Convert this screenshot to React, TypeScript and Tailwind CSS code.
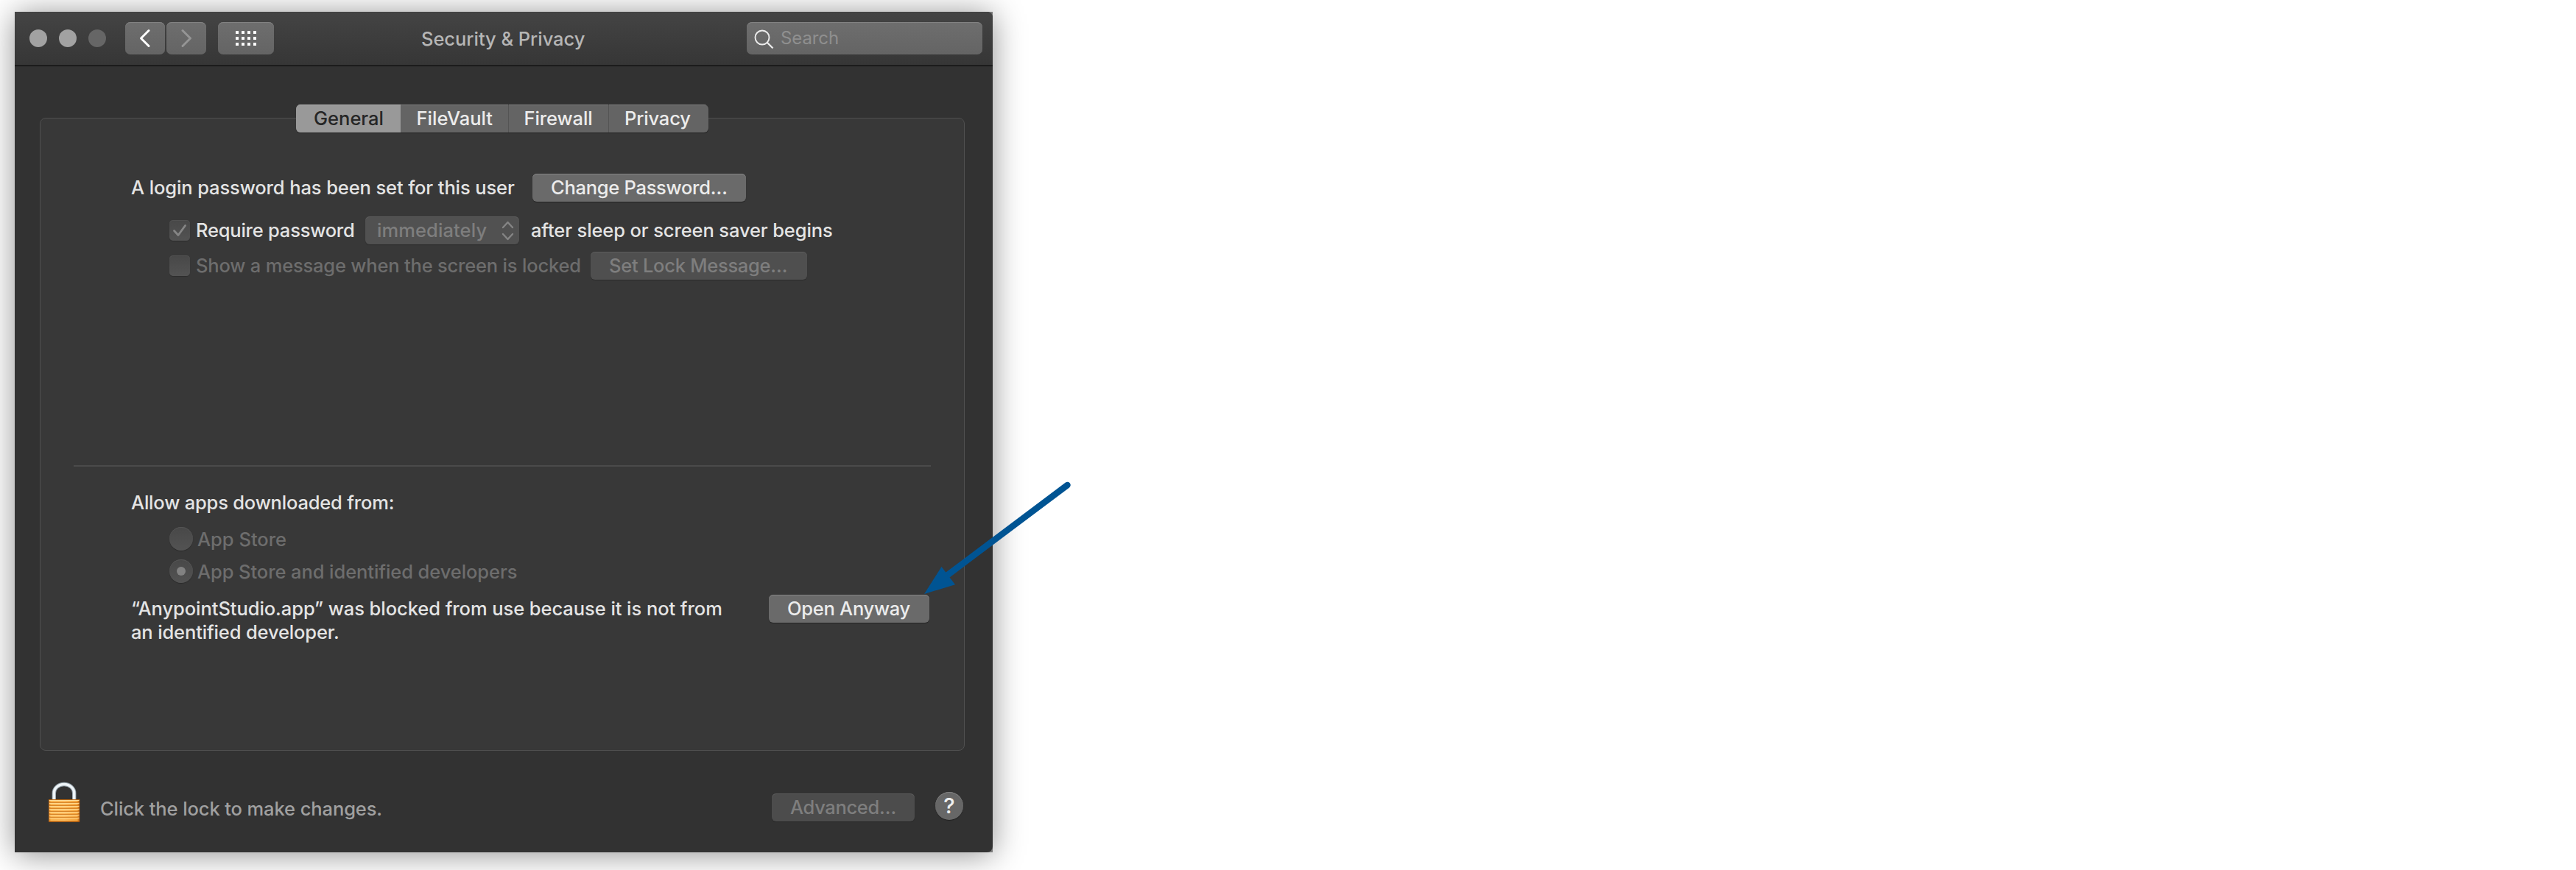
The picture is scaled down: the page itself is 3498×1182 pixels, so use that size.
import type { ReactNode } from "react";

function PushButton({ children, className }: { children: ReactNode; className: string }) {
  return (
    <button
      className={`h-[38px] shrink-0 rounded-[6px] bg-[#6a6a6a] text-left whitespace-nowrap text-[#ececec] shadow-[inset_0_1px_0_#848484,0_1px_1px_rgba(0,0,0,0.35)] ${className}`}
    >
      {children}
    </button>
  );
}

function DimButton({ children, className }: { children: ReactNode; className: string }) {
  return (
    <button
      className={`h-[38px] shrink-0 rounded-[6px] text-left whitespace-nowrap text-[#7e7e7e] shadow-[inset_0_1px_0_#5c5c5c,0_1px_1px_rgba(0,0,0,0.2)] ${className}`}
    >
      {children}
    </button>
  );
}

function Checkbox({ checked = false }: { checked?: boolean }) {
  return (
    <span className="size-7 shrink-0 rounded-[5px] bg-linear-to-b from-[#484848] to-[#535353] shadow-[inset_0_1px_0_#525252,0_1px_1px_rgba(0,0,0,0.2)]">
      {checked && (
        <svg viewBox="0 0 28 28" className="size-7" fill="none" stroke="#858585" strokeWidth="2.8" strokeLinecap="round" strokeLinejoin="round">
          <path d="M6.5 14.5 12 20.5 21.5 7.5" />
        </svg>
      )}
    </span>
  );
}

function Radio({ checked = false }: { checked?: boolean }) {
  return (
    <span className="-mt-0.5 flex size-8 shrink-0 items-center justify-center rounded-full bg-linear-to-b from-[#484848] to-[#535353] shadow-[inset_0_1px_0_#555,0_1px_1px_rgba(0,0,0,0.25)]">
      {checked && <span className="size-3 rounded-full bg-[#828282]" />}
    </span>
  );
}

function LockIcon() {
  return (
    <svg width="44" height="56" viewBox="0 0 44 56" className="shrink-0">
      <defs>
        <linearGradient id="brass" x1="0" x2="1" y1="0" y2="0">
          <stop offset="0" stopColor="#d9791c" />
          <stop offset="0.07" stopColor="#f9b450" />
          <stop offset="0.5" stopColor="#fbb85a" />
          <stop offset="0.92" stopColor="#f5a53c" />
          <stop offset="1" stopColor="#b5590c" />
        </linearGradient>
      </defs>
      <path d="M8.3 25V15.5a13.7 12 0 0 1 27.4 0V25" fill="none" stroke="#93a0a8" strokeWidth="5.4" />
      <path d="M8.3 25V15.5a13.7 12 0 0 1 27.4 0V25" fill="none" stroke="#eef4f8" strokeWidth="3.6" />
      <rect x="1.2" y="24" width="42" height="31" rx="1.2" fill="url(#brass)" />
      {[28, 32, 36, 40, 44, 48].map((y) => (
        <g key={y}>
          <rect x="2" y={y} width="40.4" height="1" fill="#d88528" />
          <rect x="2" y={y + 1} width="40.4" height="1" fill="#ffd88e" />
        </g>
      ))}
      <rect x="1.2" y="24" width="42" height="1" fill="#b8660f" />
      <rect x="2" y="25" width="40.4" height="1" fill="#ffdc98" />
      <rect x="1.2" y="53.8" width="42" height="1.3" rx="0.6" fill="#a8540a" />
    </svg>
  );
}

function TitleBar() {
  return (
    <header className="flex h-[74px] items-start border-b border-black bg-linear-to-b from-[#444444] to-[#363636]">
      <div className="mt-6 ml-5 flex gap-4">
        <span className="size-6 rounded-full bg-[#a2a2a2]" />
        <span className="size-6 rounded-full bg-[#a2a2a2]" />
        <span className="size-6 rounded-full bg-[#666666]" />
      </div>
      <div className="mt-3.5 ml-[26px] flex gap-0.5">
        <button className="h-11 w-[54px] rounded-[7px] bg-linear-to-b from-[#6e6e6e] to-[#646464] shadow-[inset_0_1px_0_#828282]">
          <svg viewBox="0 0 54 44" fill="none" stroke="#ffffff" strokeWidth="3" strokeLinecap="round" strokeLinejoin="round">
            <path d="M32 11.5 21.5 22 32 32.5" />
          </svg>
        </button>
        <button className="h-11 w-[54px] rounded-[7px] bg-linear-to-b from-[#6e6e6e] to-[#646464] shadow-[inset_0_1px_0_#828282]">
          <svg viewBox="0 0 54 44" fill="none" stroke="#959595" strokeWidth="3" strokeLinecap="round" strokeLinejoin="round">
            <path d="M22 11.5 32.5 22 22 32.5" />
          </svg>
        </button>
      </div>
      <button className="mt-3.5 ml-4 flex h-11 w-[76px] items-center justify-center rounded-[7px] bg-linear-to-b from-[#6e6e6e] to-[#646464] shadow-[inset_0_1px_0_#828282]">
        <span className="grid grid-cols-4 gap-1">
          {Array.from({ length: 12 }, (_, i) => (
            <span key={i} className="size-1 bg-white" />
          ))}
        </span>
      </button>
      <h1 className="mt-[18px] ml-[200px] w-[442px] leading-[38px] font-[450] tracking-[-0.04px] whitespace-nowrap text-[#b6b6b6]">
        Security &amp; Privacy
      </h1>
      <div className="mt-3.5 flex h-11 w-[320px] items-center rounded-[7px] bg-linear-to-b from-[#6e6e6e] to-[#646464] shadow-[inset_0_1px_0_#828282]">
        <svg width="46" height="44" viewBox="0 0 46 44" fill="none" stroke="#ececec" strokeWidth="1.9" className="shrink-0">
          <circle cx="21" cy="21" r="9.5" />
          <path d="m27.5 27.5 8 8" strokeWidth="2.3" />
        </svg>
        <span className="text-[24px] tracking-[-0.1px] text-[#8f8f8f]">Search</span>
      </div>
    </header>
  );
}

function Tabs() {
  return (
    <nav className="z-10 flex h-[38px] w-[560px] self-center overflow-hidden rounded-[6px] bg-[#646464] leading-[38px] text-[#ececec] shadow-[0_1px_1px_rgba(0,0,0,0.35)]">
      <span className="w-[142px] bg-[#999999] pl-6 text-[#262626] shadow-[inset_0_1px_0_#b0b0b0]">General</span>
      <span className="w-[147px] border-r border-[#545454] pl-[21.5px] shadow-[inset_0_1px_0_#808080]">FileVault</span>
      <span className="w-[136px] border-r border-[#545454] pl-[20.5px] tracking-[-0.1px] shadow-[inset_0_1px_0_#808080]">Firewall</span>
      <span className="w-[135px] pl-[21px] tracking-[-0.15px] shadow-[inset_0_1px_0_#808080]">Privacy</span>
    </nav>
  );
}

function GeneralPanel() {
  return (
    <section className="-mt-5 flex h-[860px] flex-col rounded-[8px] border border-[#505050] bg-[#383838] text-[#e4e4e4]">
      <div className="mt-[75px] flex h-[38px] items-center pl-[123px]">
        <span className="w-[545px] tracking-[-0.11px]">A login password has been set for this user</span>
        <PushButton className="w-[290px] pl-[25px] tracking-[-0.28px]">Change Password…</PushButton>
      </div>

      <div className="mt-5 flex h-[38px] items-center pl-[175px]">
        <Checkbox checked />
        <span className="w-[238px] pl-2 tracking-[-0.22px]">Require password</span>
        <DimButton className="flex w-[209px] items-center bg-[#515151] pl-4">
          <span className="w-[167px] tracking-[0.1px]">immediately</span>
          <svg width="20" height="30" viewBox="0 0 20 30" fill="none" stroke="#858585" strokeWidth="2.4" strokeLinecap="round" strokeLinejoin="round">
            <path d="M4 11 10.5 4 17 11M4 20l6.500 7L17 20" />
          </svg>
        </DimButton>
        <span className="pl-4 tracking-[-0.12px]">after sleep or screen saver begins</span>
      </div>

      <div className="mt-2.5 flex h-[38px] items-center pl-[175px] text-[#6d6d6d]">
        <Checkbox />
        <span className="w-[544px] pl-2 tracking-[-0.19px]">Show a message when the screen is locked</span>
        <DimButton className="w-[294px] bg-[#4f4f4f] pl-[25px] tracking-[-0.26px]">Set Lock Message…</DimButton>
      </div>

      <hr className="mt-[252px] mr-[45px] ml-[45px] h-0.5 border-0 bg-[#4b4b4b]" />

      <p className="mt-[30px] pl-[123px] leading-[38px] tracking-[-0.19px]">Allow apps downloaded from:</p>

      <div className="mt-3 flex h-[38px] items-center gap-1.5 pl-[175px] text-[#6d6d6d]">
        <Radio />
        <span>App Store</span>
      </div>
      <div className="mt-1.5 flex h-[38px] items-center gap-1.5 pl-[175px] tracking-[-0.08px] text-[#6d6d6d]">
        <Radio checked />
        <span>App Store and identified developers</span>
      </div>

      <div className="mt-3 flex pl-[123px]">
        <p className="mt-[3px] w-[866px] leading-8 tracking-[-0.06px]">
          “AnypointStudio.app” was blocked from use because it is not from
          <br />
          <span className="tracking-[-0.14px]">an identified developer.</span>
        </p>
        <PushButton className="w-[218px] pl-[25px] tracking-[-0.27px]">Open Anyway</PushButton>
      </div>
    </section>
  );
}

function Footer() {
  return (
    <footer className="mt-[42px] flex items-start pl-[11px]">
      <LockIcon />
      <span className="mt-[18px] w-[939px] pl-[27px] leading-[38px] tracking-[-0.1px] text-[#a0a0a0]">Click the lock to make changes.</span>
      <DimButton className="mt-4 w-[194px] bg-[#4c4c4c] pl-[25px] tracking-[-0.33px]">Advanced…</DimButton>
      <button className="mt-3.5 ml-7 size-[38px] rounded-full bg-[#676767] text-[29px] leading-[38px] text-[#f0f0f0] shadow-[inset_0_1px_0_#808080,0_1px_1px_rgba(0,0,0,0.35)]">
        ?
      </button>
    </footer>
  );
}

export default function App() {
  return (
    <main className="relative h-[1182px] w-[3498px] overflow-hidden bg-white pt-4 pl-5 font-['Inter',sans-serif] text-[25.5px] leading-[38px]">
      <div className="h-[1142px] w-[1328px] bg-[#7a7a7a] shadow-[0_3px_40px_rgba(0,0,0,0.44)]">
        <div className="flex h-full flex-col overflow-hidden rounded-r-[8px] bg-[#323232]">
          <TitleBar />
          <div className="mt-[52px] mr-[38px] ml-[34px] flex flex-col font-[450]">
            <Tabs />
            <GeneralPanel />
            <Footer />
          </div>
        </div>
      </div>

      <svg width="240" height="190" viewBox="0 0 240 190" className="absolute top-[640px] left-[1240px]">
        <path d="M209.5 19 47 141" stroke="#005493" strokeWidth="8.5" strokeLinecap="round" />
        <path d="M15 167 38.5 130 57 154.3Z" fill="#005493" />
      </svg>
    </main>
  );
}
